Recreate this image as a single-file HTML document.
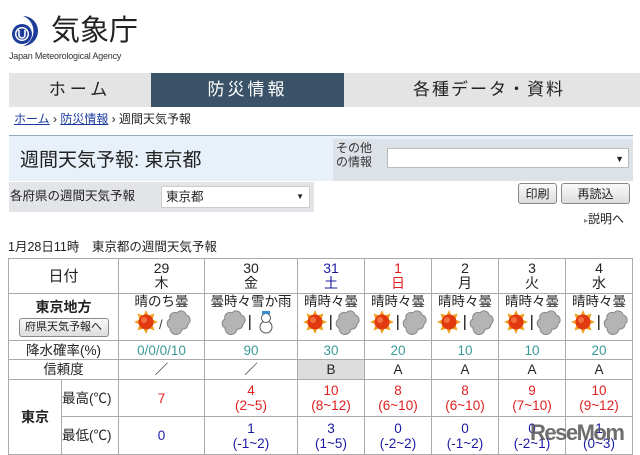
<!DOCTYPE html>
<html><head><meta charset="utf-8"><style>
*{margin:0;padding:0;box-sizing:border-box}
body{width:640px;height:454px;overflow:hidden;background:#fff;font-family:"Liberation Sans","Noto Sans CJK JP",sans-serif;color:#222;position:relative}
.a{position:absolute}
table{position:absolute;left:8px;top:258px;border-collapse:collapse;table-layout:fixed;font-size:13.5px}
td{border:1px solid #aaa;text-align:center;line-height:15px;padding:0}
.b{color:#1a1aa0}.r{color:#e02020}.t{color:#3a9a9a}
.btn{border:1px solid #888;border-radius:3px;background:linear-gradient(#fafafa,#ddd);font-size:12px;text-align:center;line-height:20px}
</style></head><body>
<svg width="0" height="0" style="position:absolute"><defs>
<g id="sun"><polygon points="12,0 14.5,5.5 20.5,3.5 18.5,9.5 24,12 18.5,14.5 20.5,20.5 14.5,18.5 12,24 9.5,18.5 3.5,20.5 5.5,14.5 0,12 5.5,9.5 3.5,3.5 9.5,5.5" fill="#f0a020"/><circle cx="12" cy="12" r="7.5" fill="#e23a10"/><circle cx="10" cy="10" r="3" fill="#f27040"/></g>
<g id="cld"><path d="M4,18 a5,5 0 0 1 0,-9 a5,5 0 0 1 7,-6 a5,5 0 0 1 9,2 a5,5 0 0 1 2,9 a5,5 0 0 1 -6,5 a5,5 0 0 1 -12,-1z" fill="#b4b4b4" stroke="#888" stroke-width="1"/></g>
</defs></svg>
<svg class="a" style="left:9px;top:14px" width="34" height="34" viewBox="0 0 34 34"><path d="M14,2 A16,16 0 0 1 14,32 A13,13 0 0 0 14,2z" fill="#1d3c9a"/><circle cx="13" cy="20" r="10" fill="#1d3c9a"/><circle cx="13" cy="20" r="7" fill="#fff"/><circle cx="13" cy="20" r="5.5" fill="#1d3c9a"/><path d="M10,16 v5 a3,3 0 0 0 6,0 v-5" stroke="#fff" stroke-width="1.6" fill="none"/></svg>
<div class="a" style="left:51px;top:15px;font-size:29px;line-height:32px;color:#222">気象庁</div>
<div class="a" style="left:9px;top:51px;font-size:9px;line-height:10px;color:#333;letter-spacing:-0.2px">Japan Meteorological Agency</div>
<div class="a" style="left:9px;top:73px;width:631px;height:34px;background:#e4e4e4"></div>
<div class="a" style="left:9px;top:73px;width:142px;height:34px;font-size:17px;line-height:34px;text-align:center;letter-spacing:4px">ホーム</div>
<div class="a" style="left:151px;top:73px;width:193px;height:34px;background:#3b5368;color:#fff;font-size:17px;line-height:34px;text-align:center;letter-spacing:3px">防災情報</div>
<div class="a" style="left:344px;top:73px;width:290px;height:34px;font-size:17px;line-height:34px;text-align:center;letter-spacing:2px">各種データ・資料</div>
<div class="a" style="left:14px;top:112px;font-size:12px;line-height:15px"><u style="color:#1a3aa0">ホーム</u> › <u style="color:#1a3aa0">防災情報</u> › 週間天気予報</div>
<div class="a" style="left:9px;top:135px;width:624px;height:46px;background:#e8f1f9;border-top:1px solid #9ab"></div>
<div class="a" style="left:20px;top:150px;font-size:19px;line-height:22px">週間天気予報: 東京都</div>
<div class="a" style="left:333px;top:139px;width:300px;height:42px;background:#dde2e8"></div>
<div class="a" style="left:336px;top:141px;font-size:12px;line-height:14px;color:#333">その他<br>の情報</div>
<div class="a" style="left:387px;top:148px;width:242px;height:20px;background:#fff;border:1px solid #bbb;font-size:9px;text-align:right;padding-right:4px;line-height:20px">▼</div>
<div class="a" style="left:9px;top:182px;width:305px;height:30px;background:#e2e4e8"></div>
<div class="a" style="left:10px;top:189px;font-size:12.5px;line-height:15px">各府県の週間天気予報</div>
<div class="a" style="left:161px;top:186px;width:149px;height:22px;background:#fff;border:1px solid #ccc;font-size:12.5px;line-height:20px;padding-left:4px">東京都<span style="position:absolute;right:5px;font-size:8px">▼</span></div>
<div class="a btn" style="left:518px;top:183px;width:39px;height:21px">印刷</div>
<div class="a btn" style="left:561px;top:183px;width:69px;height:21px">再読込</div>
<div class="a" style="left:584px;top:212px;font-size:12px;line-height:15px"><span style="font-size:8px;color:#888">▸</span>説明へ</div>
<div class="a" style="left:8px;top:240px;font-size:12.5px;line-height:15px">1月28日11時　東京都の週間天気予報</div>
<table>
<colgroup><col style="width:53px"><col style="width:57px"><col style="width:86px"><col style="width:93px"><col style="width:67px"><col style="width:67px"><col style="width:67px"><col style="width:67px"><col style="width:67px"></colgroup>
<tr style="height:35px;font-size:14px"><td colspan="2" style="font-size:15px">日付</td><td>29<br>木</td><td>30<br>金</td><td class="b">31<br>土</td><td class="r">1<br>日</td><td>2<br>月</td><td>3<br>火</td><td>4<br>水</td></tr>
<tr style="height:47px"><td colspan="2"><div style="font-size:14px;font-weight:bold;line-height:18px">東京地方</div><div class="btn" style="display:inline-block;width:90px;height:19px;line-height:17px;font-size:11px;margin-top:2px">府県天気予報へ</div></td>
<td style="vertical-align:top">晴のち曇<br><svg width="62" height="26"><use href="#sun" x="3" y="1"/><text x="28" y="20" font-size="13" fill="#333">/</text><use href="#cld" x="35" y="1"/></svg></td>
<td style="vertical-align:top">曇時々雪か雨<br><svg width="70" height="26"><use href="#cld" x="5" y="1"/><rect x="33" y="6" width="1.5" height="15" fill="#333"/><circle cx="50" cy="18" r="6" fill="#fff" stroke="#555"/><circle cx="50" cy="9" r="4.5" fill="#fff" stroke="#555"/><rect x="46" y="2" width="8" height="3" fill="#3a8ad0"/></svg></td>
<td style="vertical-align:top">晴時々曇<br><svg width="62" height="26"><use href="#sun" x="3" y="1"/><rect x="30" y="6" width="1.5" height="15" fill="#333"/><use href="#cld" x="35" y="1"/></svg></td>
<td style="vertical-align:top">晴時々曇<br><svg width="62" height="26"><use href="#sun" x="3" y="1"/><rect x="30" y="6" width="1.5" height="15" fill="#333"/><use href="#cld" x="35" y="1"/></svg></td>
<td style="vertical-align:top">晴時々曇<br><svg width="62" height="26"><use href="#sun" x="3" y="1"/><rect x="30" y="6" width="1.5" height="15" fill="#333"/><use href="#cld" x="35" y="1"/></svg></td>
<td style="vertical-align:top">晴時々曇<br><svg width="62" height="26"><use href="#sun" x="3" y="1"/><rect x="30" y="6" width="1.5" height="15" fill="#333"/><use href="#cld" x="35" y="1"/></svg></td>
<td style="vertical-align:top">晴時々曇<br><svg width="62" height="26"><use href="#sun" x="3" y="1"/><rect x="30" y="6" width="1.5" height="15" fill="#333"/><use href="#cld" x="35" y="1"/></svg></td></tr>
<tr style="height:19px" class="t"><td colspan="2" style="color:#222">降水確率(%)</td><td>0/0/0/10</td><td>90</td><td>30</td><td>20</td><td>10</td><td>10</td><td>20</td></tr>
<tr style="height:20px"><td colspan="2">信頼度</td><td>／</td><td>／</td><td style="background:#ddd">B</td><td>A</td><td>A</td><td>A</td><td>A</td></tr>
<tr style="height:37px" class="r"><td rowspan="2" style="color:#222;font-size:14px;font-weight:bold">東京</td><td style="color:#222;text-align:left">最高(℃)</td><td>7</td><td>4<br>(2~5)</td><td>10<br>(8~12)</td><td>8<br>(6~10)</td><td>8<br>(6~10)</td><td>9<br>(7~10)</td><td>10<br>(9~12)</td></tr>
<tr style="height:38px" class="b"><td style="color:#222;text-align:left">最低(℃)</td><td>0</td><td>1<br>(-1~2)</td><td>3<br>(1~5)</td><td>0<br>(-2~2)</td><td>0<br>(-1~2)</td><td>0<br>(-2~1)</td><td>1<br>(0~3)</td></tr>
</table>
<div class="a" style="left:530px;top:420px;font-size:22px;line-height:26px;font-weight:bold;color:#555;opacity:.85;letter-spacing:-1.5px">ReseMom</div>
</body></html>
